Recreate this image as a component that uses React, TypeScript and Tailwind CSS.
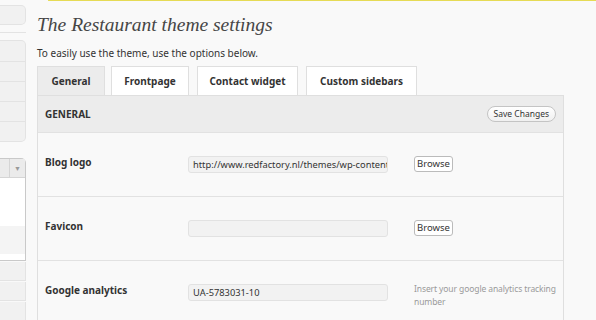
const tabs = [
  { label: "General", w: "w-[68px]", active: true },
  { label: "Frontpage", w: "w-[78px]", active: false },
  { label: "Contact widget", w: "w-[101px]", active: false },
  { label: "Custom sidebars", w: "w-[111px]", active: false },
];

function Sidebar() {
  return (
    <div className="w-[26px] shrink-0 flex flex-col">
      <div className="mt-[5px] h-[22px] rounded-r-[5px] border border-l-0 border-[#e3e3e3] bg-[#f1f1f1]" />
      <div className="mt-[7px] h-px bg-[#e3e3e3]" />
      <div className="mt-[7px] rounded-r-[5px] border border-l-0 border-[#e3e3e3] bg-[#f1f1f1] flex flex-col">
        <div className="h-[21px] border-b border-[#e3e3e3]" />
        <div className="h-[20px] border-b border-[#e3e3e3]" />
        <div className="h-[20px] border-b border-[#e3e3e3]" />
        <div className="h-[20px] border-b border-[#e3e3e3]" />
        <div className="h-[19px]" />
      </div>
      <div className="mt-[16px] h-[112px] rounded-tr-[5px] border border-l-0 border-[#c9c9c9] bg-white flex flex-col">
        <div className="h-[19px] flex justify-end border-b border-[#d5d5d5] bg-[#ebebeb]">
          <div className="w-[16px] border-l border-[#d5d5d5] flex items-center justify-center text-[7px] leading-none text-[#999]">
            ▼
          </div>
        </div>
        <div className="h-[48px]" />
        <div className="h-[28px] bg-[#f4f4f4]" />
      </div>
      <div className="mt-[1px] h-[21px] border-b border-r border-[#e3e3e3] bg-[#f1f1f1]" />
      <div className="mt-[1px] h-[20px] border-b border-r border-[#e3e3e3] bg-[#f1f1f1]" />
      <div className="mt-[1px] h-[20px] border-r border-[#e3e3e3] bg-[#f1f1f1]" />
    </div>
  );
}

function Row({
  label,
  value,
  browse,
  help,
}: {
  label: string;
  value: string;
  browse?: boolean;
  help?: string;
}) {
  return (
    <div className="h-[64px] border-b border-[#e2e2e2] flex items-start pt-[22px] pl-[7px]">
      <div className="w-[143px] shrink-0 text-[10px] leading-[14px] font-bold text-[#333]">{label}</div>
      <div className="mt-[1px] w-[200px] shrink-0 h-[17px] rounded-[3px] border border-[#e2e2e2] bg-[#f2f2f2] px-[4px] text-[9.3px] leading-[15px] text-[#333] overflow-hidden whitespace-nowrap">
        {value}
      </div>
      {browse && (
        <button className="mt-[1px] ml-[26px] h-[16px] px-[2px] rounded-[3px] border border-[#bbb] bg-white text-[9.5px] leading-[14px] text-[#333]">
          Browse
        </button>
      )}
      {help && (
        <div className="ml-[26px] w-[146px] shrink-0 text-[8.5px] tracking-[-0.1px] leading-[12.5px] text-[#999]">
          {help}
        </div>
      )}
    </div>
  );
}

export default function App() {
  return (
    <div
      className="w-[596px] h-[320px] overflow-hidden bg-[#f9f9f9] flex"
      style={{ fontFamily: '"Noto Sans", sans-serif' }}
    >
      <Sidebar />
      <div className="flex-1 pl-[11px] flex flex-col">
        <div className="ml-[11px] h-[3px] rounded-bl-[4px] border-b border-l border-[#e6db55] bg-[#fffbcc]" />
        <h1
          className="mt-[12px] text-[19.5px] leading-[24px] italic text-[#464646]"
          style={{ fontFamily: '"Liberation Serif", Georgia, serif' }}
        >
          The Restaurant theme settings
        </h1>
        <p className="mt-[10px] text-[10px] leading-[13px] text-[#333]">
          To easily use the theme, use the options below.
        </p>
        <div className="mt-[6px] flex items-end h-[29px]">
          {tabs.map((t, i) => (
            <div
              key={t.label}
              className={`${t.w} ${i === 1 ? "ml-[6px]" : i > 1 ? "ml-[8px]" : ""} h-[29px] border border-b-0 border-[#dfdfdf] flex items-center justify-center text-[10px] font-bold text-[#333] ${
                t.active ? "bg-[#ececec]" : "bg-white"
              }`}
            >
              {t.label}
            </div>
          ))}
        </div>
        <div className="w-[527px] border-x border-t border-[#dfdfdf] flex flex-col">
          <div className="h-[37px] border-b border-[#e2e2e2] bg-[#ececec] flex items-center justify-between pl-[7px] pr-[7px]">
            <span className="text-[10px] font-bold text-[#333]">GENERAL</span>
            <button className="h-[16px] px-[6px] rounded-full border border-[#c4c4c4] bg-gradient-to-b from-white to-[#f0f0f0] text-[8.5px] leading-[14px] text-[#333]">
              Save Changes
            </button>
          </div>
          <Row label="Blog logo" value="http://www.redfactory.nl/themes/wp-content" browse />
          <Row label="Favicon" value="" browse />
          <Row label="Google analytics" value="UA-5783031-10" help="Insert your google analytics tracking number" />
        </div>
      </div>
    </div>
  );
}
